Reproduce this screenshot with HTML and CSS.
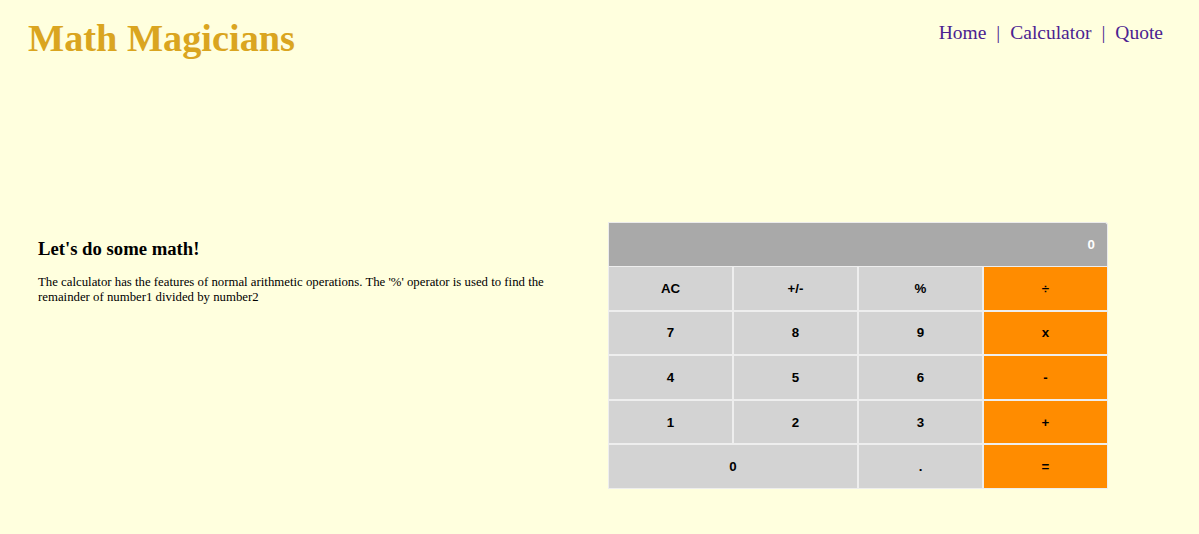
FILE: index.html
```html
<!DOCTYPE html>
<html lang="en">
<head>
<meta charset="utf-8">
<title>Math Magicians</title>
<link rel="stylesheet" href="styles.css">
</head>
<body>
<header class="header">
  <h1 class="logo">Math Magicians</h1>
  <nav class="nav">
    <a class="nav-link" href="#">Home</a>
    <span class="sep">|</span>
    <a class="nav-link" href="#">Calculator</a>
    <span class="sep">|</span>
    <a class="nav-link" href="#">Quote</a>
  </nav>
</header>
<main class="main">
  <section class="intro">
    <h3 class="intro-title">Let's do some math!</h3>
    <p class="intro-text">The calculator has the features of normal arithmetic operations. The '%' operator is used to find the remainder of number1 divided by number2</p>
  </section>
  <section class="calc">
    <div class="display">0</div>
    <div class="keys">
      <button class="key">AC</button>
      <button class="key">+/-</button>
      <button class="key">%</button>
      <button class="key op">÷</button>
      <button class="key">7</button>
      <button class="key">8</button>
      <button class="key">9</button>
      <button class="key op">x</button>
      <button class="key">4</button>
      <button class="key">5</button>
      <button class="key">6</button>
      <button class="key op">-</button>
      <button class="key">1</button>
      <button class="key">2</button>
      <button class="key">3</button>
      <button class="key op">+</button>
      <button class="key zero">0</button>
      <button class="key">.</button>
      <button class="key op">=</button>
    </div>
  </section>
</main>
</body>
</html>
```

FILE: styles.css
```css
* { box-sizing: border-box; }
html, body {
  margin: 0;
  padding: 0;
  background: #ffffde;
  font-family: "Liberation Serif", "Times New Roman", serif;
}
.header {
  display: flex;
  justify-content: space-between;
  align-items: flex-start;
  padding: 0 36px 0 28px;
}
.logo {
  margin: 14px 0 0;
  font-size: 38.3px;
  line-height: 48px;
  font-weight: bold;
  color: #daa520;
}
.nav {
  display: flex;
  gap: 10px;
  margin-top: 21px;
  font-size: 19.5px;
  line-height: 24px;
}
.nav-link {
  color: #4b2291;
  text-decoration: none;
}
.sep { color: #4b2291; }
.main {
  display: flex;
  align-items: flex-start;
  gap: 40px;
  margin-top: 160px;
  padding: 0 91px 0 38px;
}
.intro {
  width: 530px;
  padding-top: 16px;
}
.intro-title {
  margin: 0 0 15px;
  font-size: 18.7px;
  line-height: 22px;
}
.intro-text {
  margin: 0;
  font-size: 12.8px;
  line-height: 15px;
}
.calc {
  width: 500px;
  font-family: "Liberation Sans", Arial, sans-serif;
}
.display {
  height: 44px;
  background: #a9a9a9;
  color: #fff;
  font-weight: bold;
  font-size: 13.3px;
  text-align: right;
  padding: 14px 12px 0 0;
  border-radius: 0 3px 0 0;
  border: 1px solid #ececec;
  border-bottom: none;
}
.keys {
  display: grid;
  grid-template-columns: repeat(4, 1fr);
}
.key {
  height: 44.6px;
  margin: 0;
  background: #d3d3d3;
  border: 1px solid #eeeeee;
  font-family: "Liberation Sans", Arial, sans-serif;
  font-weight: bold;
  font-size: 13.3px;
  color: #000;
  padding: 0;
}
.key.op { background: #ff8c00; }
.key.zero { grid-column: span 2; }
```
